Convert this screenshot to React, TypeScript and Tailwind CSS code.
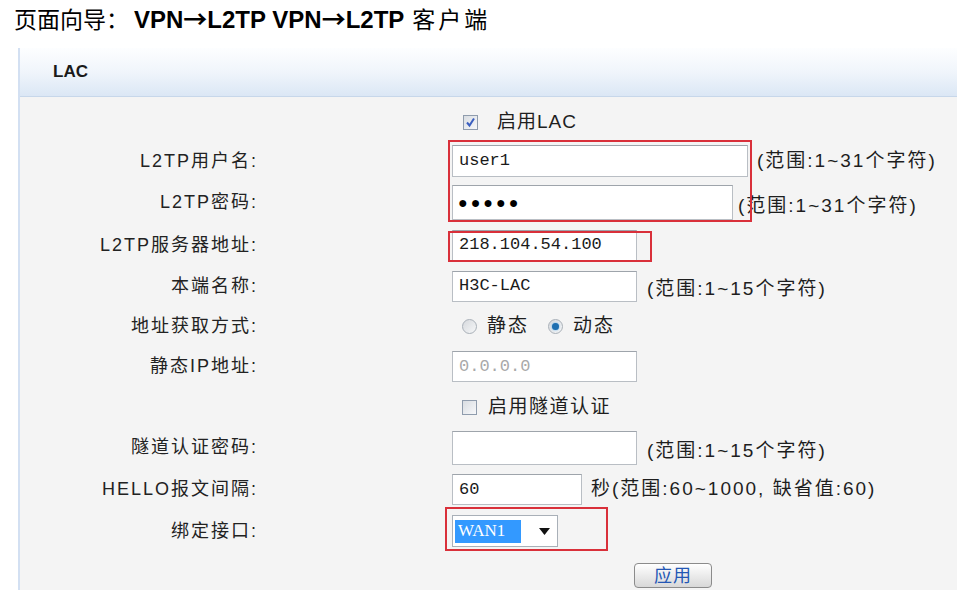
import { ReactNode } from 'react';

const cjk = { fontFamily: '"Liberation Sans", "Noto Sans CJK SC", sans-serif' };
const mono = { fontFamily: '"Liberation Mono", "Noto Sans CJK SC", monospace' };
const arrow = { fontFamily: '"Noto Sans CJK SC", sans-serif' };

const Checkbox = ({ checked }: { checked?: boolean }) => (
  <span className="inline-flex w-[15px] h-[15px] border border-[#8f9cad] bg-gradient-to-br from-[#d9dde2] to-[#f7f8fa] items-center justify-center">
    {checked && (
      <svg width="11" height="11" viewBox="0 0 11 11">
        <path d="M2 5.5 L4.5 8.5 L9 1.5" stroke="#3b5fc0" strokeWidth="2" fill="none" />
      </svg>
    )}
  </span>
);

const Radio = ({ checked }: { checked?: boolean }) => (
  <span className="inline-flex w-[15px] h-[15px] rounded-full border border-[#a9b0b8] bg-gradient-to-br from-[#d6d9dd] to-[#f6f7f8] items-center justify-center">
    {checked && <span className="w-[7px] h-[7px] rounded-full bg-[#1f6fb0] shadow-[0_0_2px_#5ab0f0]" />}
  </span>
);

const Hint = ({ children, className = '' }: { children: ReactNode; className?: string }) => (
  <span className={`text-[19px] text-[#1e1e1e] tracking-[2px] whitespace-nowrap ${className}`} style={cjk}>
    {children}
  </span>
);

const TextBox = ({ value, w, h = 31, gray }: { value: string; w: number; h?: number; gray?: boolean }) => (
  <div
    className={`bg-white border border-[#b9bec4] border-t-[#9ea4ab] flex items-center pl-[6px] text-[17px] ${gray ? 'text-[#a9a9a9] bg-[#fbfbfb]' : 'text-[#1a1a1a]'}`}
    style={{ ...mono, width: w, height: h }}>
    {value}
  </div>
);

const rows: { label: string; h: number; control: ReactNode }[] = [
  {
    label: '',
    h: 38,
    control: (
      <div className="flex items-center gap-[19px] pl-[11px]">
        <Checkbox checked />
        <span className="text-[19px] text-[#1e1e1e] tracking-[1px]" style={cjk}>启用LAC</span>
      </div>
    )
  },
  {
    label: 'L2TP用户名:',
    h: 40,
    control: (
      <div className="flex items-center gap-[9px]">
        <TextBox value="user1" w={296} h={32} />
        <Hint>(范围:1~31个字符)</Hint>
      </div>
    )
  },
  {
    label: 'L2TP密码:',
    h: 43,
    control: (
      <div className="flex items-center gap-[5px]">
        <div className="bg-white border border-[#b9bec4] border-t-[#9ea4ab] w-[281px] h-[35px] flex items-center pl-[5px] text-[16px] tracking-[3px] text-black">
          ●●●●●
        </div>
        <Hint className="mt-[8px]">(范围:1~31个字符)</Hint>
      </div>
    )
  },
  { label: 'L2TP服务器地址:', h: 42, control: <TextBox value="218.104.54.100" w={185} /> },
  {
    label: '本端名称:',
    h: 40,
    control: (
      <div className="flex items-center gap-[10px]">
        <TextBox value="H3C-LAC" w={185} />
        <Hint className="mt-[6px]">(范围:1~15个字符)</Hint>
      </div>
    )
  },
  {
    label: '地址获取方式:',
    h: 41,
    control: (
      <div className="flex items-center pl-[10px] text-[19px] text-[#1e1e1e]" style={cjk}>
        <Radio />
        <span className="ml-[10px] tracking-[2px]">静态</span>
        <span className="ml-[19px] flex"><Radio checked /></span>
        <span className="ml-[10px] tracking-[2px]">动态</span>
      </div>
    )
  },
  { label: '静态IP地址:', h: 39, control: <TextBox value="0.0.0.0" w={185} gray /> },
  {
    label: '',
    h: 43,
    control: (
      <div className="flex items-center gap-[11px] pl-[10px]">
        <Checkbox />
        <span className="text-[19px] text-[#1e1e1e] tracking-[1.5px]" style={cjk}>启用隧道认证</span>
      </div>
    )
  },
  {
    label: '隧道认证密码:',
    h: 37,
    control: (
      <div className="flex items-center gap-[10px]">
        <TextBox value="" w={185} h={34} />
        <Hint className="mt-[8px]">(范围:1~15个字符)</Hint>
      </div>
    )
  },
  {
    label: 'HELLO报文间隔:',
    h: 47,
    control: (
      <div className="flex items-center gap-[9px]">
        <TextBox value="60" w={130} />
        <Hint>秒(范围:60~1000, 缺省值:60)</Hint>
      </div>
    )
  },
  {
    label: '绑定接口:',
    h: 36,
    control: (
      <div className="w-[106px] h-[32px] bg-white border border-[#a9b0b8] flex items-center px-[2px]">
        <span className="bg-[#3399ff] text-white h-[23px] w-[66px] flex items-center pl-[3px] text-[17px]" style={{ fontFamily: '"Liberation Serif", serif' }}>
          WAN1
        </span>
        <svg className="ml-[18px]" width="11" height="7" viewBox="0 0 11 7">
          <path d="M0 0 H11 L5.5 7 Z" fill="#111" />
        </svg>
      </div>
    )
  }
];

export default function App() {
  return (
    <div className="w-[967px] h-[606px] bg-white overflow-hidden" style={cjk}>
      <div className="h-[48px] pl-[14px] pt-[3px] text-[23px] text-black leading-[30px] whitespace-nowrap flex items-baseline">
        <span>页面向导：</span>
        <span className="ml-[5px] font-bold text-[24px]">
          VPN<span style={arrow}>→</span>L2TP VPN<span style={arrow}>→</span>L2TP
        </span>
        <span className="ml-[8px] tracking-[3px]">客户端</span>
      </div>

      <div className="ml-[18px] w-[939px] border-l-2 border-[#d3e0f2]">
        <div className="h-[49px] flex items-center pl-[33px] bg-gradient-to-b from-[#fdfeff] via-[#f0f5fb] to-[#dbe7f5] border-b border-[#c7d7ea]">
          <span className="text-[17px] font-bold text-[#1a1a1a]">LAC</span>
        </div>

        <div className="relative bg-[#f4f4f4] pt-[6px] h-[493px]">
          {rows.map(({ label, h, control }, index) => (
            <div key={index} className="grid grid-cols-[238px_1fr] gap-x-[194px] items-center" style={{ height: h }}>
              <span className="text-right text-[18px] text-[#222] tracking-[2px] whitespace-nowrap">{label}</span>
              {control}
            </div>
          ))}

          <div className="flex pl-[614px] pt-[14px]">
            <button className="w-[78px] h-[25px] rounded-[4px] border border-[#8b8b8b] bg-gradient-to-b from-white to-[#d8d8d8] text-[18px] text-[#2457b5] tracking-[1px] leading-none">
              应用
            </button>
          </div>

          {/* red annotation boxes */}
          <div className="absolute left-[428px] top-[43px] w-[304px] h-[82px] border-2 border-[#d9303a]" />
          <div className="absolute left-[428px] top-[134px] w-[204px] h-[31px] border-2 border-[#d9303a]" />
          <div className="absolute left-[425px] top-[410px] w-[163px] h-[44px] border-2 border-[#d9303a]" />
        </div>
      </div>
    </div>
  );
}
